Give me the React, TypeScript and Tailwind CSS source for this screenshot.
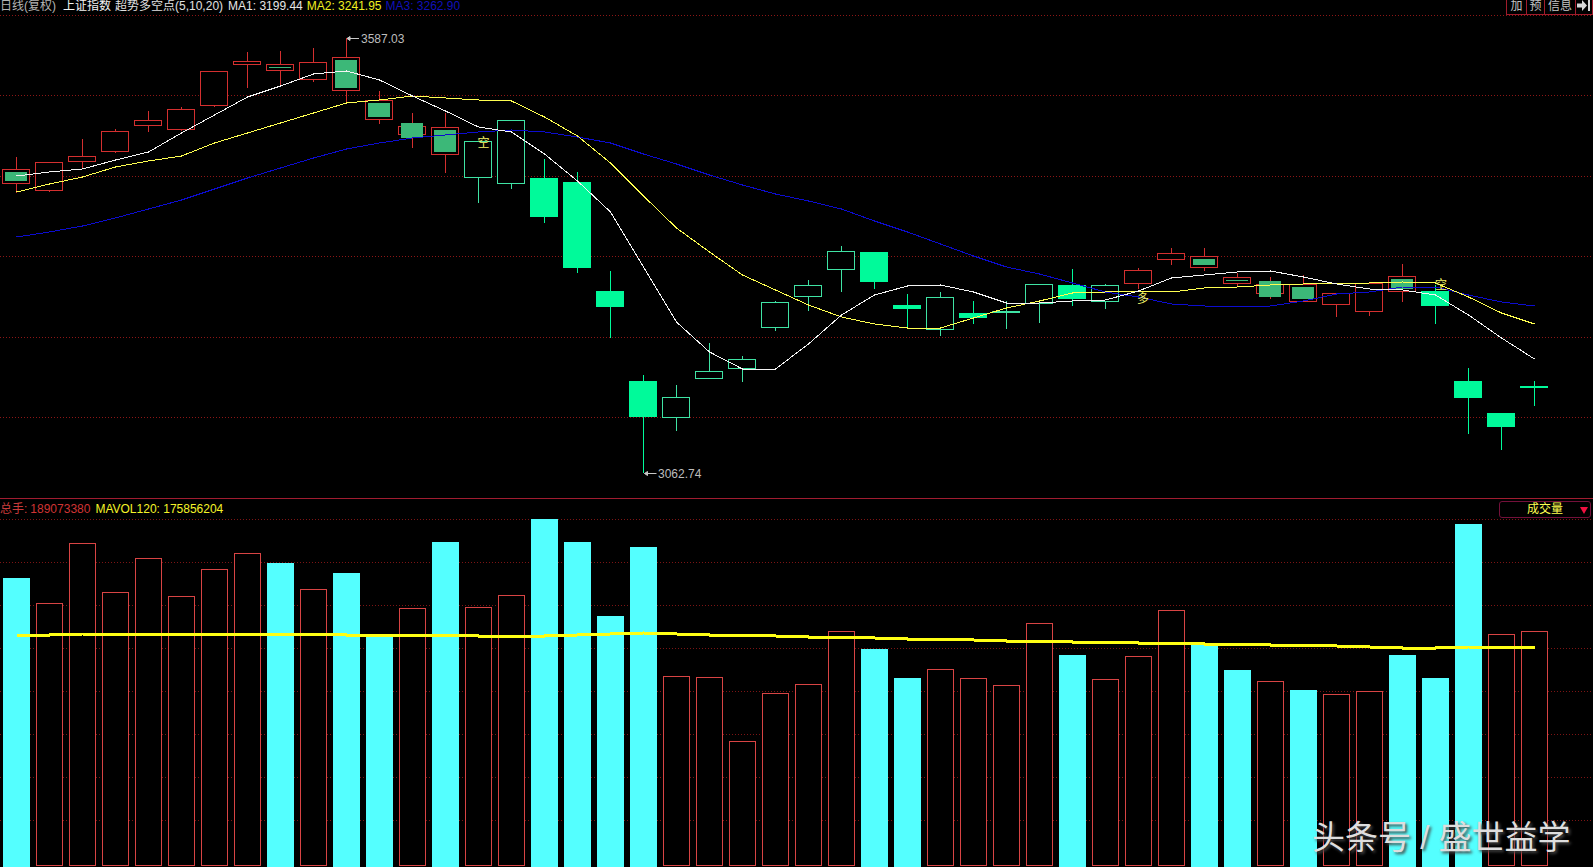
type Kind = 'r' | 'rg' | 'rx' | 'g' | 'f';
type Candle = [number, number, number, number, Kind];

const RED = '#d42f2f';
const HOLLOW = '#3fe3a4';
const SOLID = '#00fa9a';
const DULL = '#3cb878';

const cx = (i: number) => 16.5 + 33 * i;

// hi, body top, body bottom, lo, kind
const candles: Candle[] = [
  [157, 169, 183, 193, 'rg'], [162, 162, 190, 192, 'r'], [139, 156, 161, 168, 'r'], [129, 131, 151, 153, 'r'],
  [111, 120, 125, 132, 'r'], [107, 109, 129, 131, 'r'], [71, 71, 105, 107, 'r'], [52, 61, 64, 88, 'r'],
  [51, 64, 70, 86, 'rg'], [48, 62, 79, 82, 'r'], [38, 57, 90, 102, 'rg'], [91, 100, 119, 124, 'rg'],
  [113, 126, 134, 148, 'rx'], [113, 127, 154, 173, 'rg'], [141, 141, 177, 203, 'g'], [120, 120, 183, 189, 'g'],
  [159, 178, 217, 223, 'f'], [172, 182, 268, 273, 'f'], [271, 291, 307, 338, 'f'], [375, 381, 417, 473, 'f'],
  [385, 397, 417, 431, 'g'], [343, 371, 378, 379, 'g'], [356, 359, 368, 382, 'g'], [301, 302, 327, 331, 'g'],
  [280, 285, 296, 311, 'g'], [246, 251, 269, 292, 'g'], [252, 252, 282, 289, 'f'], [294, 305, 309, 327, 'f'],
  [292, 297, 329, 336, 'g'], [301, 313, 318, 324, 'f'], [301, 311, 312, 329, 'g'], [284, 284, 303, 323, 'g'],
  [269, 285, 299, 306, 'f'], [284, 285, 301, 309, 'g'], [268, 270, 283, 289, 'r'], [248, 253, 259, 265, 'r'],
  [248, 256, 267, 271, 'rg'], [273, 277, 283, 286, 'rg'], [277, 284, 293, 299, 'rx'], [275, 284, 301, 301, 'rg'],
  [293, 293, 304, 317, 'r'], [283, 283, 311, 316, 'r'], [264, 276, 291, 302, 'rg'], [285, 291, 306, 324, 'f'],
  [368, 381, 398, 434, 'f'], [413, 413, 427, 450, 'f'], [381, 386, 388, 406, 'f'],
];

const ma1 = [176, 172, 169, 160, 152, 133, 115, 97, 86, 74, 71, 80, 96, 111, 127, 132, 154, 181, 212, 267, 322, 352, 369, 369, 344, 315, 295, 286, 285, 292, 303, 303, 301, 300, 291, 278, 275, 272, 271, 277, 284, 289, 290, 295, 315, 338, 359];
const ma2 = [192, 184, 177, 167, 161, 156, 143, 133, 123, 113, 103, 100, 96, 98, 100, 101, 117, 136, 163, 196, 228, 252, 275, 290, 305, 317, 324, 328, 328, 318, 308, 301, 293, 292, 291, 292, 288, 287, 285, 284, 283, 283, 282, 283, 297, 313, 324];
const ma3 = [237, 232, 226, 218, 209, 200, 189, 178, 168, 158, 149, 143, 138, 135, 132, 130, 132, 137, 143, 154, 164, 175, 185, 194, 201, 209, 221, 232, 244, 256, 267, 274, 283, 292, 297, 304, 306, 307, 306, 301, 294, 292, 287, 287, 295, 302, 306];

// volume bar tops, c = cyan (down day), r = red outline
const volumes: [number, 'c' | 'r'][] = [
  [578, 'c'], [603, 'r'], [543, 'r'], [592, 'r'], [558, 'r'], [596, 'r'], [569, 'r'], [553, 'r'], [563, 'c'], [589, 'r'],
  [573, 'c'], [636, 'c'], [608, 'r'], [542, 'c'], [607, 'r'], [595, 'r'], [519, 'c'], [542, 'c'], [616, 'c'], [547, 'c'],
  [676, 'r'], [677, 'r'], [741, 'r'], [693, 'r'], [684, 'r'], [631, 'r'], [649, 'c'], [678, 'c'], [669, 'r'], [678, 'r'],
  [685, 'r'], [623, 'r'], [655, 'c'], [679, 'r'], [656, 'r'], [610, 'r'], [644, 'c'], [670, 'c'], [681, 'r'], [690, 'c'],
  [694, 'r'], [691, 'r'], [655, 'c'], [678, 'c'], [524, 'c'], [634, 'r'], [631, 'r'],
];

const mavol = [635, 635, 634, 634, 634, 634, 634, 634, 634, 634, 635, 635, 635, 635, 636, 636, 636, 635, 634, 633, 634, 635, 635, 636, 637, 637, 638, 639, 639, 640, 641, 641, 642, 642, 643, 643, 644, 644, 645, 645, 646, 647, 648, 648, 647, 647, 647];

const pts = (ys: number[]) => ys.map((y, i) => `${cx(i)},${y}`).join(' ');

function CandleMark({ c, i }: { c: Candle; i: number }) {
  const [hi, top, bot, lo, kind] = c;
  const x = 2 + 33 * i;
  const wick = kind === 'r' || kind === 'rg' || kind === 'rx' ? RED : kind === 'g' ? HOLLOW : SOLID;
  return (
    <g shapeRendering="crispEdges">
      <line x1={cx(i)} x2={cx(i)} y1={hi} y2={lo} stroke={wick} />
      {kind === 'f' && <rect x={x} y={top} width={28} height={bot - top} fill={SOLID} />}
      {kind === 'g' && <rect x={x + 0.5} y={top + 0.5} width={27} height={bot - top} fill="#000" stroke={HOLLOW} />}
      {kind === 'r' && <rect x={x + 0.5} y={top + 0.5} width={27} height={bot - top} fill="#000" stroke={RED} />}
      {kind === 'rg' && (
        <>
          <rect x={x + 0.5} y={top + 0.5} width={27} height={bot - top} fill="#000" stroke={RED} />
          <rect x={x + 3} y={top + 3} width={22} height={Math.max(1, bot - top - 5)} fill={DULL} />
        </>
      )}
      {kind === 'rx' && (
        <>
          <rect x={x + 0.5} y={top + 0.5} width={27} height={bot - top} fill="#000" stroke={RED} />
          <rect x={x + 3} y={top - 3} width={22} height={bot - top + 7} fill={DULL} />
        </>
      )}
    </g>
  );
}

function PriceChart() {
  return (
    <svg className="block h-[483px] w-[1593px]" viewBox="0 15 1593 483">
      {[15, 95, 176, 256, 337, 417].map((y) => (
        <line key={y} x1={0} x2={1593} y1={y + 0.5} y2={y + 0.5} stroke="#8c1616" strokeDasharray="1 2" shapeRendering="crispEdges" />
      ))}
      {candles.map((c, i) => <CandleMark key={i} c={c} i={i} />)}
      <polyline points={pts(ma3)} fill="none" stroke="#0c0cd0" strokeWidth={1} shapeRendering="crispEdges" />
      <polyline points={pts(ma2)} fill="none" stroke="#ffff50" strokeWidth={1} shapeRendering="crispEdges" />
      <polyline points={pts(ma1)} fill="none" stroke="#f4f4f4" strokeWidth={1} shapeRendering="crispEdges" />

      <path d="M347 38.5h12M347 38.5l3-2v4z" stroke="#c8c8c8" fill="#c8c8c8" />
      <text x={361} y={43} fontSize={12} fill="#bdbdbd">3587.03</text>
      <path d="M644.5 473.5h12M644.5 473.5l3-2v4z" stroke="#c8c8c8" fill="#c8c8c8" />
      <text x={658} y={478} fontSize={12} fill="#bdbdbd">3062.74</text>

      <text x={483.5} y={147} fontSize={12} fill="#f5f56a" textAnchor="middle">空</text>
      <text x={1143} y={303} fontSize={12} fill="#f5f56a" textAnchor="middle">多</text>
      <text x={1441} y={289} fontSize={12} fill="#f5f56a" textAnchor="middle">空</text>
    </svg>
  );
}

function VolumeChart() {
  return (
    <svg className="block h-[348px] w-[1593px]" viewBox="0 519 1593 348">
      {[519, 562, 605, 648, 691, 734, 777, 820].map((y) => (
        <line key={y} x1={0} x2={1593} y1={y + 0.5} y2={y + 0.5} stroke="#7c1414" strokeDasharray="1 2" shapeRendering="crispEdges" />
      ))}
      {volumes.map(([top, kind], i) =>
        kind === 'c' ? (
          <rect key={i} x={3 + 33 * i} y={top} width={27} height={867 - top} fill="#54ffff" shapeRendering="crispEdges" />
        ) : (
          <rect key={i} x={3.5 + 33 * i} y={top + 0.5} width={26} height={865 - top} fill="#000" stroke="#d84444" shapeRendering="crispEdges" />
        ),
      )}
      <polyline points={pts(mavol)} fill="none" stroke="#ffff14" strokeWidth={3} shapeRendering="crispEdges" />
    </svg>
  );
}

export default function App() {
  return (
    <div className="flex h-[867px] w-[1593px] flex-col overflow-hidden bg-black font-['Liberation_Sans','Noto_Sans_CJK_SC',sans-serif] text-xs">
      {/* price pane */}
      <section className="h-[498px]">
        <div className="flex h-[15px] items-start justify-between leading-[12px]">
          <div className="flex whitespace-nowrap">
            <span className="text-[#b4b4b4]">日线(复权)</span>
            <span className="ml-[7px] text-[#f2f2f2]">上证指数</span>
            <span className="ml-[4px] text-[#e0e0e0]">超势多空点(5,10,20)</span>
            <span className="ml-[5px] text-[#e6e6e6]">MA1: 3199.44</span>
            <span className="ml-[4px] text-[#f0f020]">MA2: 3241.95</span>
            <span className="ml-[4px] text-[#1010b8]">MA3: 3262.90</span>
          </div>
          <div className="flex h-[15px] border-x border-b border-[#a01c2c] text-[#c4c4c4]">
            <span className="w-[20px] border-r border-[#a01c2c] text-center">加</span>
            <span className="w-[18px] border-r border-[#a01c2c] text-center">预</span>
            <span className="w-[31px] border-r border-[#a01c2c] text-center">信息</span>
            <span className="flex w-[16px] items-start justify-center">
              <svg width="14" height="11" viewBox="0 0 14 11">
                <path d="M0 3.5h5V0l5 5.5-5 5.5V7.5H0z" fill="#d8d8d8" />
                <rect x="11" y="0" width="2" height="11" fill="#d8d8d8" />
              </svg>
            </span>
          </div>
        </div>
        <PriceChart />
      </section>

      {/* volume pane */}
      <section className="relative h-[369px] border-t border-[#a01c30]">
        <div className="flex h-[20px] items-center justify-between pr-[2px]">
          <div className="flex whitespace-nowrap">
            <span className="text-[#c83c3c]">总手:</span>
            <span className="ml-[3px] text-[#d03434]">189073380</span>
            <span className="ml-[5px] text-[#f4f428]">MAVOL120: 175856204</span>
          </div>
          <div className="relative flex h-[17px] w-[92px] items-center justify-center rounded-[3px] border border-[#74103a] text-[#ffff50]">
            成交量
            <span className="absolute right-[2px] top-[5px] h-0 w-0 border-x-[4px] border-t-[7px] border-x-transparent border-t-[#f01040]" />
          </div>
        </div>
        <VolumeChart />
        <div className="absolute left-[1312px] top-[321px] whitespace-nowrap text-[33px] leading-[36px] text-[#dedede] [text-shadow:2px_2px_3px_#444]">
          头条号 / 盛世益学
        </div>
      </section>
    </div>
  );
}
